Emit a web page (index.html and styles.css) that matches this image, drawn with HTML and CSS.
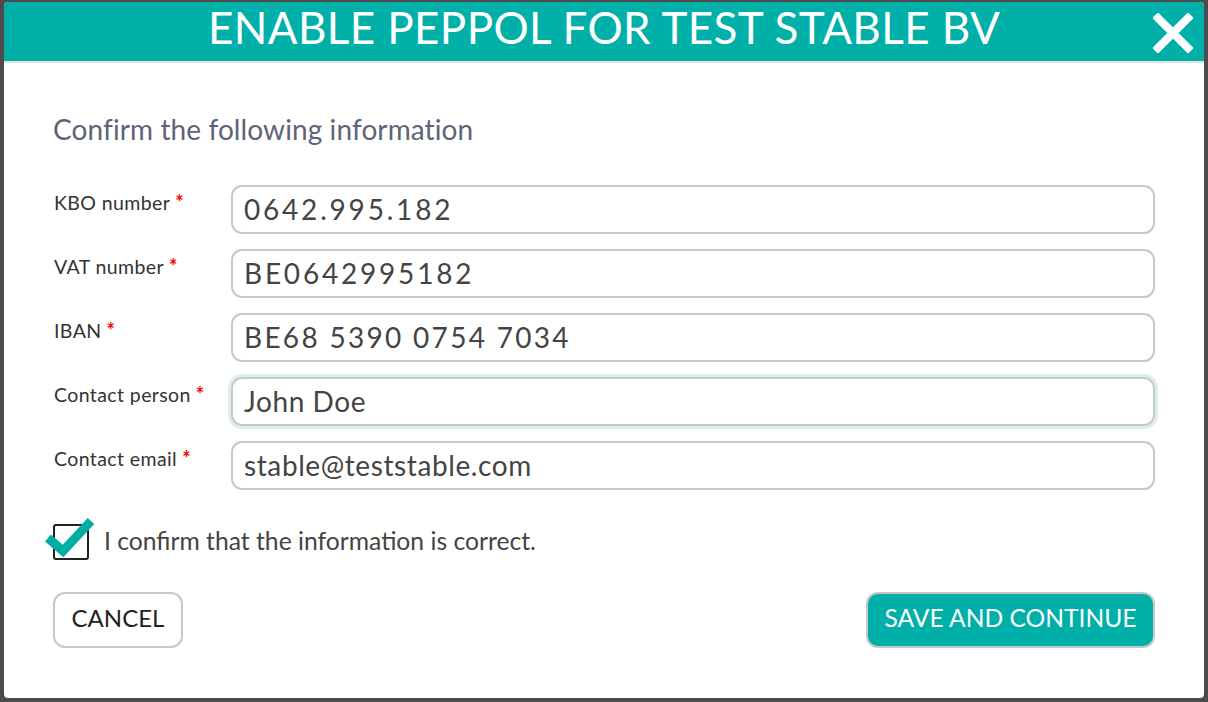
FILE: index.html
```html
<!DOCTYPE html>
<html>
<head>
<meta charset="utf-8">
<link rel="stylesheet" href="styles.css">
</head>
<body>
<div class="modal">
  <div class="modal-header">
    <h1 class="title">ENABLE PEPPOL FOR TEST STABLE BV</h1>
    <span class="close" aria-label="close">
      <svg width="40" height="40" viewBox="0 0 40 40"><path d="M5 5 L35 35 M35 5 L5 35" stroke="#fff" stroke-width="8" stroke-linecap="square"/></svg>
    </span>
  </div>
  <div class="modal-body">
    <h2 class="subtitle">Confirm the following information</h2>
    <div class="form">
      <div class="row"><label class="lbl">KBO number<span class="req">*</span></label><div class="input num">0642.995.182</div></div>
      <div class="row"><label class="lbl">VAT number<span class="req">*</span></label><div class="input num">BE0642995182</div></div>
      <div class="row"><label class="lbl">IBAN<span class="req">*</span></label><div class="input num2">BE68 5390 0754 7034</div></div>
      <div class="row"><label class="lbl">Contact person<span class="req">*</span></label><div class="input focus">John Doe</div></div>
      <div class="row"><label class="lbl">Contact email<span class="req">*</span></label><div class="input">stable@teststable.com</div></div>
    </div>
    <div class="confirm">
      <span class="checkbox">
        <svg class="check" width="54" height="44" viewBox="0 0 54 44"><path d="M5 23 L20 36 L48 6" fill="none" stroke="#00aea7" stroke-width="9"/></svg>
      </span>
      <span class="confirm-text">I confirm that the information is correct.</span>
    </div>
    <div class="actions">
      <button class="btn btn-cancel">CANCEL</button>
      <button class="btn btn-save">SAVE AND CONTINUE</button>
    </div>
  </div>
</div>
</body>
</html>
```
FILE: styles.css
```css
html, body {
  margin: 0;
  padding: 0;
}
body {
  background: #4b4b4b;
  width: 1208px;
  height: 702px;
  overflow: hidden;
  font-family: Lato, "Open Sans", sans-serif;
}
.modal {
  margin: 2px 0 0 4px;
  width: 1200px;
  height: 696px;
  background: #fff;
  border-radius: 4px;
  display: flex;
  flex-direction: column;
}
.modal-header {
  box-sizing: border-box;
  height: 61px;
  padding-bottom: 9px;
  background: #00afa8;
  border-bottom: 2px solid #e2e2e2;
  border-radius: 4px 4px 0 0;
  position: relative;
  display: flex;
  align-items: center;
  justify-content: center;
  flex-shrink: 0;
}
.title {
  margin: 0;
  font-weight: 400;
  font-size: 44px;
  color: #fff;
  letter-spacing: 0.4px;
  line-height: 44px;
}
.close {
  position: absolute;
  right: 11px;
  top: 11px;
  width: 40px;
  height: 40px;
}
.modal-body {
  padding: 0 49px 0 49px;
}
.subtitle {
  margin: 50px 0 0 0;
  font-weight: 400;
  font-size: 28px;
  line-height: 32px;
  color: #5d6478;
  letter-spacing: 0.1px;
}
.form {
  margin-top: 40px;
  display: flex;
  flex-direction: column;
  gap: 15px;
}
.row {
  display: grid;
  grid-template-columns: 178px 1fr;
  align-items: start;
}
.lbl {
  font-size: 19.5px;
  color: #333;
  padding-top: 5px;
  padding-left: 1px;
  letter-spacing: 0.4px;
}
.req {
  color: #f00;
  margin-left: 5px;
  font-size: 20px;
  font-weight: 700;
}
.input {
  height: 45px;
  border: 2px solid #c8c8c8;
  border-radius: 11px;
  padding-left: 11px;
  font-size: 28px;
  line-height: 44px;
  color: #444;
  letter-spacing: 0.6px;
}
.input.num {
  letter-spacing: 2.8px;
}
.input.num2 {
  letter-spacing: 2.3px;
}
.input.focus {
  box-shadow: 0 0 0 3px #dcefeb;
}
.confirm {
  margin-top: 34px;
  display: flex;
  align-items: center;
  gap: 15px;
}
.checkbox {
  width: 32px;
  height: 32px;
  border: 2px solid #222;
  border-radius: 3px;
  position: relative;
}
.check {
  position: absolute;
  left: -12px;
  top: -11px;
}
.confirm-text {
  font-size: 24.7px;
  color: #444;
  padding-bottom: 4px;
}
.actions {
  margin-top: 32px;
  display: flex;
  justify-content: space-between;
}
.btn {
  box-sizing: border-box;
  height: 56px;
  border-radius: 12px;
  border: 2px solid #c8c8c8;
  font-family: Lato, "Open Sans", sans-serif;
  font-size: 24px;
  padding: 0 12px 5px;
}
.btn-cancel {
  background: #fff;
  color: #222;
  width: 130px;
}
.btn-save {
  background: #00afa8;
  color: #fff;
  width: 289px;
  font-size: 24.6px;
}
```
